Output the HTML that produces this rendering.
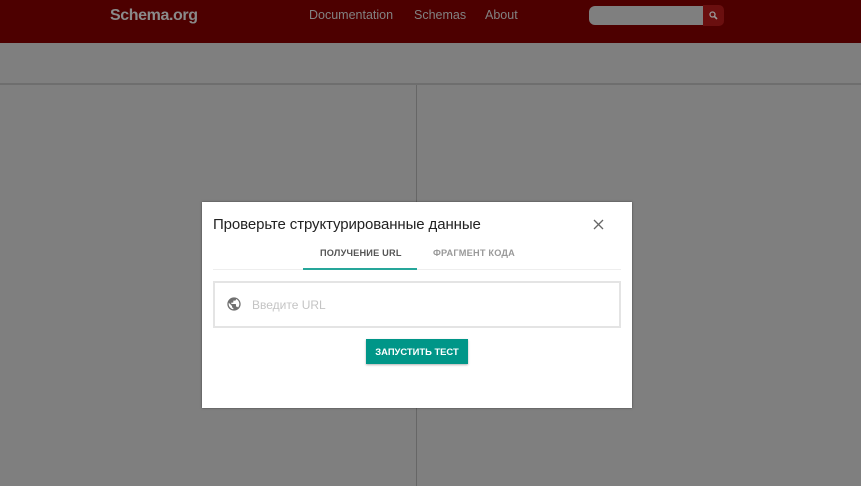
<!DOCTYPE html>
<html><head><meta charset="utf-8"><style>
*{margin:0;padding:0;box-sizing:border-box}
body{width:861px;height:486px;overflow:hidden;background:#7f7f7f;font-family:"Liberation Sans",sans-serif;position:relative}
.hdr{position:absolute;left:0;top:0;width:861px;height:43px;background:#4d0000}
.logo{position:absolute;left:110px;top:7px;font-size:16px;font-weight:bold;color:#8a8a8a;letter-spacing:-0.4px}
.nav{position:absolute;top:8px;font-size:12.5px;color:#828282}
.search{position:absolute;left:589px;top:6px;width:115px;height:19px;background:#7f7f7f;border-radius:6px 0 0 6px}
.sbtn{position:absolute;left:703px;top:5px;width:21px;height:21px;background:#6a0f0f;border-radius:0 5px 5px 0}
.band{position:absolute;left:0;top:83px;width:861px;height:2px;background:#6e6e6e}
.vl{position:absolute;left:416px;top:85px;width:1px;height:401px;background:#666}
.dlg{position:absolute;left:202px;top:202px;width:430px;height:206px;background:#fff;box-shadow:0 0 2px rgba(0,0,0,.5)}
.t{position:absolute;left:11px;top:14px;font-size:15px;color:#222;letter-spacing:-0.1px}
.x{position:absolute;left:391px;top:17px}
.tab{position:absolute;top:46px;font-size:9.2px;font-weight:bold;letter-spacing:.2px}
.ul{position:absolute;left:101px;top:66px;width:114px;height:2px;background:#26a69a}
.div{position:absolute;left:11px;top:67px;width:408px;height:1px;background:#eee}
.inp{position:absolute;left:11px;top:79px;width:408px;height:47px;border:2px solid #e4e4e4}
.ph{position:absolute;left:37px;top:15px;font-size:12px;color:#c4c4c4}
.btn{position:absolute;left:164px;top:137px;width:102px;height:25px;background:#009688;color:#fff;font-size:9.4px;font-weight:bold;text-align:center;line-height:25px;box-shadow:0 1px 2px rgba(0,0,0,.3)}
</style></head><body>
<div class="hdr">
<div class="logo">Schema.org</div>
<div class="nav" style="left:309px">Documentation</div>
<div class="nav" style="left:414px">Schemas</div>
<div class="nav" style="left:485px">About</div>
<div class="search"></div>
<div class="sbtn"><svg width="21" height="21" viewBox="0 0 21 21"><circle cx="9.5" cy="9.5" r="2.5" fill="none" stroke="#999" stroke-width="1.3"/><path d="M11.3 11.3L14 14" stroke="#999" stroke-width="1.6"/></svg></div>
</div>
<div class="band"></div>
<div class="vl"></div>
<div class="dlg">
<div class="t">Проверьте структурированные данные</div>
<svg class="x" width="11" height="11" viewBox="0 0 11 11"><path d="M1 1L10 10M10 1L1 10" stroke="#666" stroke-width="1.3"/></svg>
<div class="tab" style="left:118px;color:#555">ПОЛУЧЕНИЕ URL</div>
<div class="tab" style="left:231px;color:#999">ФРАГМЕНТ КОДА</div>
<div class="div"></div>
<div class="ul"></div>
<div class="inp">
<svg style="position:absolute;left:11px;top:13px" width="16" height="16" viewBox="0 0 24 24"><path fill="#707070" d="M12 2C6.48 2 2 6.48 2 12s4.48 10 10 10 10-4.48 10-10S17.520 2 12 2zm-1 17.93c-3.95-.49-7-3.850-7-7.930 0-.62.08-1.21.21-1.79L9 15v1c0 1.1.9 2 2 2v1.93zm6.9-2.54c-.26-.81-1-1.39-1.9-1.39h-1v-3c0-.55-.45-1-1-1H8v-2h2c.55 0 1-.45 1-1V7h2c1.1 0 2-.9 2-2v-.41c2.93 1.19 5 4.06 5 7.41 0 2.08-.8 3.97-2.1 5.39z"/></svg>
<div class="ph">Введите URL</div>
</div>
<div class="btn">ЗАПУСТИТЬ ТЕСТ</div>
</div>
</body></html>
